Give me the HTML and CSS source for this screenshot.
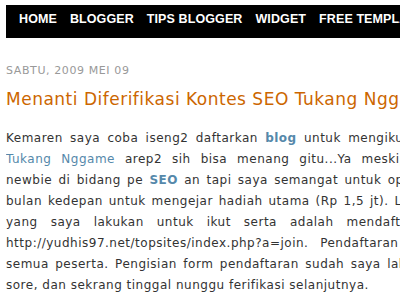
FILE: index.html
```html
<!DOCTYPE html>
<html lang="id">
<head>
    <meta charset="UTF-8">
    <title>Menanti Diferifikasi Kontes SEO Tukang Nggame</title>
    <link rel="stylesheet" href="styles.css">
</head>
<body>
    <div class="outer-wrapper">
        <ul class="menu">
            <li><a href="#">HOME</a></li>
            <li><a href="#">BLOGGER</a></li>
            <li><a href="#">TIPS BLOGGER</a></li>
            <li><a href="#">WIDGET</a></li>
            <li><a href="#">FREE TEMPLATE</a></li>
            <li><a href="#">CONTACT</a></li>
        </ul>

        <div class="main">
            <h2 class="date-header">Sabtu, 2009 Mei 09</h2>
            <div class="post">
                <h3 class="post-title">Menanti Diferifikasi Kontes SEO Tukang Nggame</h3>
                <div class="post-body">
                    <p>Kemaren saya coba iseng2 daftarkan <a href="#"><b>blog</b></a> untuk mengikuti kontes SEO <a href="#">Tukang Nggame</a> arep2 sih bisa menang gitu...Ya meskipun tergolong newbie di bidang pe <a href="#"><b>SEO</b></a> an tapi saya semangat untuk optimasi selama bulan kedepan untuk mengejar hadiah utama (Rp 1,5 jt). Langkah utama yang saya lakukan untuk ikut serta adalah mendaftarkan diri di http://yudhis97.net/topsites/index.php?a=join. Pendaftaran gratis untuk semua peserta. Pengisian form pendaftaran sudah saya lakukan kemarin sore, dan sekrang tinggal nunggu ferifikasi selanjutnya.</p>
                </div>
            </div>
        </div>
    </div>
</body>
</html>
```

FILE: styles.css
```css
html, body {
    overflow-x: hidden;
}
body {
    margin: 5px 0 0 6px;
    background: #fff;
    color: #333;
    font-family: "DejaVu Sans", Verdana, sans-serif;
    font-size: 12px;
}
.outer-wrapper {
    width: 780px;
}

/* top menu */
.menu {
    display: flex;
    gap: 13px;
    margin: 0;
    padding: 6px 0 11px 13px;
    list-style: none;
    background: #000;
}
.menu a {
    color: #fff;
    text-decoration: none;
    font-family: "Liberation Sans", Arial, sans-serif;
    font-size: 12.5px;
    font-weight: bold;
    line-height: 16px;
    letter-spacing: 0.1px;
}

.main {
    width: 490px;
}
.date-header {
    margin: 26px 0 0;
    font-size: 11px;
    font-weight: normal;
    line-height: 14px;
    letter-spacing: 0.6px;
    text-transform: uppercase;
    color: #999;
}
.post-title {
    margin: 10px 0 0;
    font-size: 17px;
    font-weight: normal;
    line-height: 22px;
    letter-spacing: 0.5px;
    color: #cc6600;
}
.post-body p {
    margin: 18px 0 0;
    line-height: 21px;
    letter-spacing: 0.5px;
    text-align: justify;
}
.post-body a {
    color: #5588aa;
    text-decoration: none;
}
```
